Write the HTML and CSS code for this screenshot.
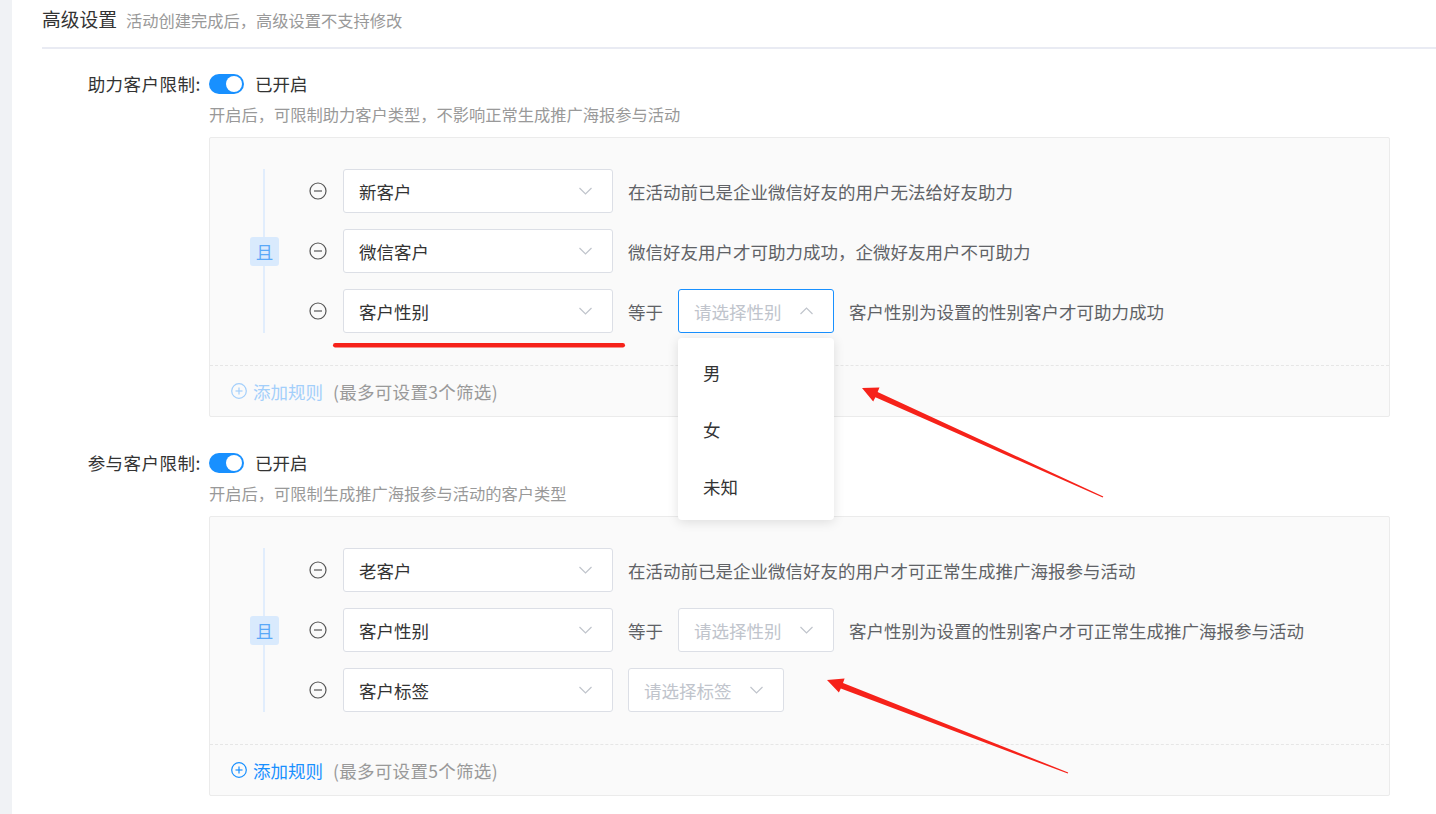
FILE: index.html
```html
<!DOCTYPE html>
<html lang="zh-CN">
<head>
<meta charset="utf-8">
<title>高级设置</title>
<link rel="stylesheet" href="styles.css">
</head>
<body>
<div class="page">
  <aside class="strip"></aside>
  <main class="main">
    <div class="section-head">
      <span class="title">高级设置</span>
      <span class="subtitle">活动创建完成后，高级设置不支持修改</span>
    </div>
    <div class="divider"></div>

    <div class="form-item first">
      <label class="label">助力客户限制:</label>
      <div class="content">
        <div class="switch-row">
          <span class="switch"><span class="knob"></span></span>
          <span class="switch-text">已开启</span>
        </div>
        <div class="hint">开启后，可限制助力客户类型，不影响正常生成推广海报参与活动</div>
        <div class="rule-box">
          <div class="rules">
            <div class="relation"><span class="badge">且</span></div>
            <div class="rule-list">
              <div class="rule">
                <svg class="minus" viewBox="0 0 18 18"><circle cx="9" cy="9" r="8" /><line x1="5" y1="9" x2="13" y2="9" /></svg>
                <div class="select wide"><span class="value">新客户</span><svg class="chev" viewBox="0 0 14 8"><polyline points="1,1 7,7 13,1" /></svg></div>
                <span class="rule-text">在活动前已是企业微信好友的用户无法给好友助力</span>
              </div>
              <div class="rule">
                <svg class="minus" viewBox="0 0 18 18"><circle cx="9" cy="9" r="8" /><line x1="5" y1="9" x2="13" y2="9" /></svg>
                <div class="select wide"><span class="value">微信客户</span><svg class="chev" viewBox="0 0 14 8"><polyline points="1,1 7,7 13,1" /></svg></div>
                <span class="rule-text">微信好友用户才可助力成功，企微好友用户不可助力</span>
              </div>
              <div class="rule">
                <svg class="minus" viewBox="0 0 18 18"><circle cx="9" cy="9" r="8" /><line x1="5" y1="9" x2="13" y2="9" /></svg>
                <div class="select wide"><span class="value">客户性别</span><svg class="chev" viewBox="0 0 14 8"><polyline points="1,1 7,7 13,1" /></svg></div>
                <span class="rule-text">等于</span>
                <div class="select narrow open">
                  <span class="placeholder">请选择性别</span><svg class="chev" viewBox="0 0 14 8"><polyline points="1,7 7,1 13,7" /></svg>
                  <ul class="dropdown">
                    <li>男</li>
                    <li>女</li>
                    <li>未知</li>
                  </ul>
                </div>
                <span class="rule-text">客户性别为设置的性别客户才可助力成功</span>
              </div>
            </div>
          </div>
          <div class="rule-footer disabled">
            <svg class="plus" viewBox="0 0 16 16"><circle cx="8" cy="8" r="7.3" /><line x1="4.5" y1="8" x2="11.5" y2="8" /><line x1="8" y1="4.5" x2="8" y2="11.5" /></svg>
            <span class="add">添加规则</span><span class="limit">(最多可设置3个筛选)</span>
          </div>
        </div>
      </div>
    </div>

    <div class="form-item second">
      <label class="label">参与客户限制:</label>
      <div class="content">
        <div class="switch-row">
          <span class="switch"><span class="knob"></span></span>
          <span class="switch-text">已开启</span>
        </div>
        <div class="hint">开启后，可限制生成推广海报参与活动的客户类型</div>
        <div class="rule-box">
          <div class="rules">
            <div class="relation"><span class="badge">且</span></div>
            <div class="rule-list">
              <div class="rule">
                <svg class="minus" viewBox="0 0 18 18"><circle cx="9" cy="9" r="8" /><line x1="5" y1="9" x2="13" y2="9" /></svg>
                <div class="select wide"><span class="value">老客户</span><svg class="chev" viewBox="0 0 14 8"><polyline points="1,1 7,7 13,1" /></svg></div>
                <span class="rule-text">在活动前已是企业微信好友的用户才可正常生成推广海报参与活动</span>
              </div>
              <div class="rule">
                <svg class="minus" viewBox="0 0 18 18"><circle cx="9" cy="9" r="8" /><line x1="5" y1="9" x2="13" y2="9" /></svg>
                <div class="select wide"><span class="value">客户性别</span><svg class="chev" viewBox="0 0 14 8"><polyline points="1,1 7,7 13,1" /></svg></div>
                <span class="rule-text">等于</span>
                <div class="select narrow"><span class="placeholder">请选择性别</span><svg class="chev" viewBox="0 0 14 8"><polyline points="1,1 7,7 13,1" /></svg></div>
                <span class="rule-text">客户性别为设置的性别客户才可正常生成推广海报参与活动</span>
              </div>
              <div class="rule">
                <svg class="minus" viewBox="0 0 18 18"><circle cx="9" cy="9" r="8" /><line x1="5" y1="9" x2="13" y2="9" /></svg>
                <div class="select wide"><span class="value">客户标签</span><svg class="chev" viewBox="0 0 14 8"><polyline points="1,1 7,7 13,1" /></svg></div>
                <div class="select narrow tag"><span class="placeholder">请选择标签</span><svg class="chev" viewBox="0 0 14 8"><polyline points="1,1 7,7 13,1" /></svg></div>
              </div>
            </div>
          </div>
          <div class="rule-footer">
            <svg class="plus" viewBox="0 0 16 16"><circle cx="8" cy="8" r="7.3" /><line x1="4.5" y1="8" x2="11.5" y2="8" /><line x1="8" y1="4.5" x2="8" y2="11.5" /></svg>
            <span class="add">添加规则</span><span class="limit">(最多可设置5个筛选)</span>
          </div>
        </div>
      </div>
    </div>
  </main>

  <svg class="annotations" viewBox="0 0 1436 814" width="1436" height="814">
    <rect x="333" y="343" width="292" height="4.5" rx="2.2" class="mark" />
    <polygon class="mark" points="862,388 879.5,387.6 877.6,391.9 1103.3,496.4 1102.7,497.6 875.4,397.3 873.2,401.4" />
    <polygon class="mark" points="827,680 844.6,678.6 843.0,683.0 1068.2,772.4 1067.8,773.6 840.8,688.6 838.9,692.6" />
  </svg>
</div>
</body>
</html>
```

FILE: styles.css
```css
* {
  box-sizing: border-box;
}

html, body {
  margin: 0;
  padding: 0;
  background: #ffffff;
}

body {
  font-family: "Noto Sans CJK SC", "Noto Sans", "Liberation Sans", sans-serif;
  color: #333333;
  font-size: 17.5px;
}

.page {
  position: relative;
  display: flex;
  width: 1436px;
  height: 814px;
  overflow: hidden;
}

.strip {
  width: 12px;
  flex: none;
  background: #f0f2f5;
}

.main {
  flex: 1;
  padding-left: 30px;
  background: #ffffff;
}

.section-head {
  display: flex;
  align-items: baseline;
  height: 38px;
  line-height: 38px;
}

.title {
  font-size: 18.75px;
  color: #333333;
}

.subtitle {
  margin-left: 9px;
  font-size: 16.25px;
  color: #999999;
}

.divider {
  margin-top: 9px;
  height: 2px;
  background: #e9ebf3;
}

.form-item {
  display: flex;
  margin-right: 46px;
}

.form-item.first {
  margin-top: 17px;
}

.form-item.second {
  margin-top: 28px;
}

.label {
  width: 167px;
  flex: none;
  padding-right: 8px;
  text-align: right;
  line-height: 36px;
  font-size: 17.5px;
  letter-spacing: 0.5px;
  color: #333333;
}

.content {
  flex: 1;
}

.switch-row {
  display: flex;
  align-items: center;
  height: 36px;
}

.switch {
  position: relative;
  display: inline-block;
  width: 35px;
  height: 20px;
  border-radius: 10px;
  background: #1890ff;
}

.knob {
  position: absolute;
  top: 2px;
  right: 2px;
  width: 16px;
  height: 16px;
  border-radius: 50%;
  background: #ffffff;
}

.switch-text {
  margin-left: 11px;
  line-height: 36px;
  color: #333333;
}

.hint {
  line-height: 24px;
  font-size: 16.25px;
  color: #999999;
}

.rule-box {
  margin-top: 11px;
  border: 1px solid #ebebeb;
  border-radius: 2px;
  background: #fafafa;
}

.rules {
  display: flex;
  padding: 31px 0 32px 40px;
}

.relation {
  position: relative;
  width: 29px;
  flex: none;
  display: flex;
  align-items: center;
}

.relation::before {
  content: "";
  position: absolute;
  left: 13px;
  top: 0;
  bottom: 0;
  width: 2px;
  background: #e1edfc;
}

.badge {
  position: relative;
  width: 29px;
  height: 29px;
  border-radius: 3px;
  background: #d9eafd;
  color: #5aa8f8;
  text-align: center;
  line-height: 29px;
  font-size: 17.5px;
}

.rule-list {
  margin-left: 30px;
  display: flex;
  flex-direction: column;
  gap: 16px;
}

.rule {
  display: flex;
  align-items: center;
  height: 44px;
}

.minus {
  width: 18px;
  height: 18px;
  margin-right: 16px;
  flex: none;
  fill: none;
  stroke: #555555;
  stroke-width: 1.2;
}

.select {
  position: relative;
  display: flex;
  align-items: center;
  justify-content: space-between;
  height: 44px;
  padding: 0 19px 0 15px;
  border: 1px solid #dcdfe6;
  border-radius: 3px;
  background: #ffffff;
  flex: none;
}

.select.wide {
  width: 270px;
}

.select.narrow {
  width: 156px;
  margin-left: 15px;
}

.select.open {
  border-color: #1890ff;
}

.value {
  color: #333333;
}

.placeholder {
  color: #c0c4cc;
}

.chev {
  width: 15px;
  height: 8px;
  fill: none;
  stroke: #c0c4cc;
  stroke-width: 1.2;
}

.rule-text {
  margin-left: 15px;
  color: #606266;
  white-space: nowrap;
}

.dropdown {
  position: absolute;
  top: calc(100% + 6px);
  left: -1px;
  width: 156px;
  margin: 0;
  padding: 6px 0 5px;
  list-style: none;
  background: #ffffff;
  border-radius: 4px;
  box-shadow: 0 2px 12px 0 rgba(0, 0, 0, 0.12);
  z-index: 5;
}

.dropdown li {
  height: 57px;
  line-height: 57px;
  padding-left: 25px;
  color: #333333;
}

.rule-footer {
  display: flex;
  align-items: center;
  height: 51px;
  padding-left: 21px;
  border-top: 1px dashed #e6e6e6;
  color: #1890ff;
}

.rule-footer.disabled {
  color: #a3cffb;
}

.plus {
  width: 16px;
  height: 16px;
  margin-right: 6px;
  fill: none;
  stroke: currentColor;
  stroke-width: 1.2;
}

.add {
  color: inherit;
}

.limit {
  margin-left: 10px;
  letter-spacing: 0.3px;
  color: #999999;
}

.annotations {
  position: absolute;
  top: 0;
  left: 0;
  pointer-events: none;
}

.mark {
  fill: #f6221a;
}
```
